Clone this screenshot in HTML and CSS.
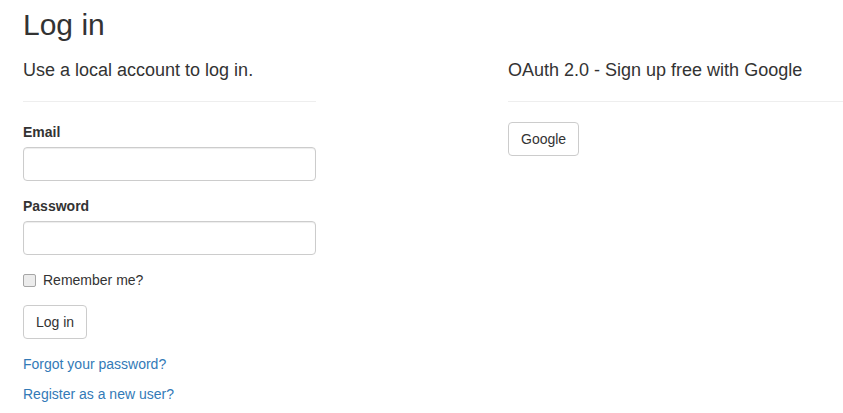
FILE: index.html
```html
<!DOCTYPE html>
<html lang="en">
<head>
<meta charset="utf-8">
<title>Log in</title>
<link rel="stylesheet" href="styles.css">
</head>
<body>
<div class="container">
  <h2 class="page-title">Log in</h2>
  <div class="row">
    <section class="col-local">
      <form>
        <h4 class="section-title">Use a local account to log in.</h4>
        <hr class="divider">
        <div class="form-group">
          <label class="control-label" for="email">Email</label>
          <input class="form-control" id="email" type="email">
        </div>
        <div class="form-group">
          <label class="control-label" for="password">Password</label>
          <input class="form-control" id="password" type="password">
        </div>
        <div class="form-group">
          <div class="checkbox">
            <label><input type="checkbox" class="check">Remember me?</label>
          </div>
        </div>
        <div class="form-group">
          <button type="button" class="btn">Log in</button>
        </div>
        <div class="form-group">
          <p class="para"><a class="link" href="#">Forgot your password?</a></p>
          <p class="para"><a class="link" href="#">Register as a new user?</a></p>
        </div>
      </form>
    </section>
    <section class="col-external">
      <h4 class="section-title">OAuth 2.0 - Sign up free with Google</h4>
      <hr class="divider">
      <form>
        <p class="para"><button type="button" class="btn">Google</button></p>
      </form>
    </section>
  </div>
</div>
</body>
</html>
```
FILE: styles.css
```css
html {
  overflow: hidden;
}
body {
  margin: 0;
  font-family: "Liberation Sans", Arial, Helvetica, sans-serif;
  font-size: 14px;
  line-height: 1.42857143;
  color: #333;
  background: #fff;
}
.container {
  padding: 0 0 0 23px;
}
.page-title {
  font-size: 30px;
  font-weight: 500;
  line-height: 1.1;
  margin: 8px 0 10px;
}
.row {
  display: flex;
  align-items: flex-start;
}
.col-local {
  width: 293px;
  flex: none;
}
.col-external {
  flex: 1;
  min-width: 0;
  margin-left: 192px;
}
.section-title {
  font-size: 18px;
  font-weight: 500;
  line-height: 1.1;
  margin: 10px 0 10px;
}
.divider {
  margin: 20px 0;
  border: 0;
  border-top: 1px solid #eee;
  height: 0;
}
.form-group {
  margin-bottom: 15px;
}
.control-label {
  display: inline-block;
  max-width: 100%;
  margin-bottom: 5px;
  font-weight: bold;
}
.form-control {
  display: block;
  width: 100%;
  height: 34px;
  padding: 6px 12px;
  box-sizing: border-box;
  font: inherit;
  color: #555;
  background: #fff;
  border: 1px solid #ccc;
  border-radius: 4px;
  box-shadow: inset 0 1px 1px rgba(0, 0, 0, .075);
  margin: 0;
}
.checkbox {
  position: relative;
  display: block;
  margin: 10px 0;
}
.checkbox label {
  display: block;
  min-height: 20px;
  padding-left: 20px;
  font-weight: normal;
}
.check {
  -webkit-appearance: none;
  appearance: none;
  position: absolute;
  left: 0;
  top: 4px;
  width: 13px;
  height: 13px;
  margin: 0;
  box-sizing: border-box;
  background: #ececec;
  border: 1px solid #a6a6a6;
  border-radius: 2px;
}
.btn {
  display: inline-block;
  padding: 6px 12px;
  margin: 0;
  font: inherit;
  line-height: 1.42857143;
  color: #333;
  background: #fff;
  border: 1px solid #ccc;
  border-radius: 4px;
  height: 34px;
  box-sizing: border-box;
  cursor: pointer;
}
.para {
  margin: 0 0 10px;
}
.link {
  color: #337ab7;
  text-decoration: none;
}
```
